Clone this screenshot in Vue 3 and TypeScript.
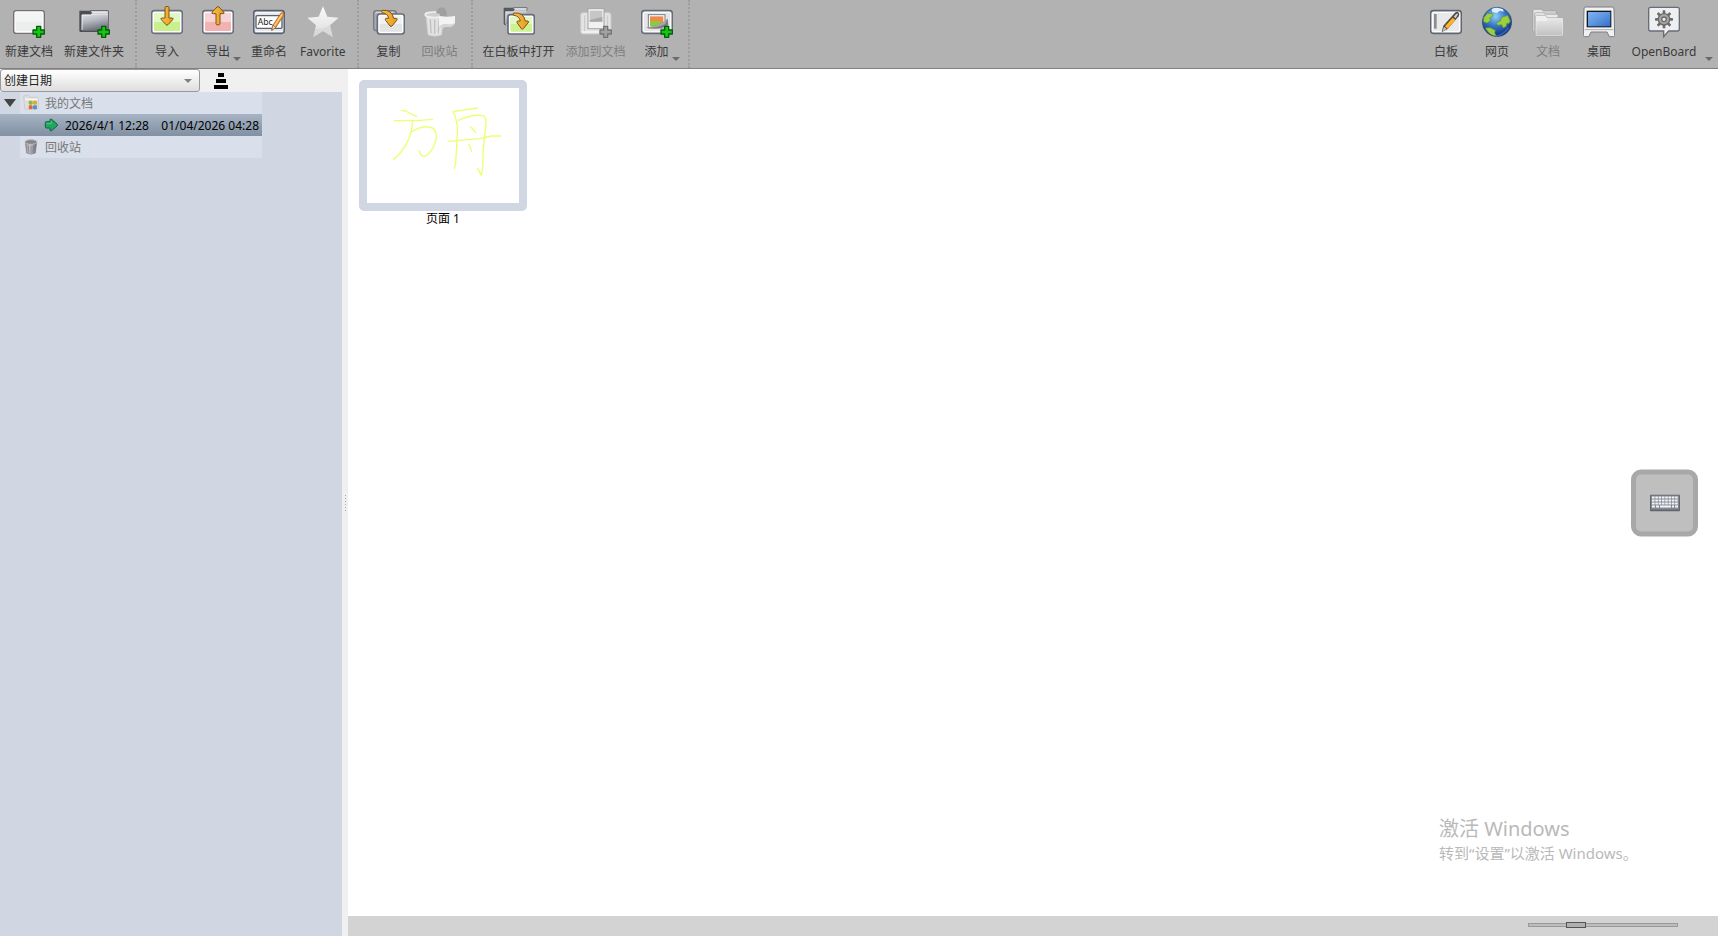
<script setup lang="ts">
import { ref } from 'vue'

interface Action {
  icon: string
  label: string
  disabled?: boolean
  menu?: boolean
}

const groups: Action[][] = [
  [
    { icon: 'doc', label: '新建文档' },
    { icon: 'folder', label: '新建文件夹' },
  ],
  [
    { icon: 'import', label: '导入' },
    { icon: 'export', label: '导出', menu: true },
    { icon: 'rename', label: '重命名' },
    { icon: 'star', label: 'Favorite' },
  ],
  [
    { icon: 'copy', label: '复制' },
    { icon: 'trash', label: '回收站', disabled: true },
  ],
  [
    { icon: 'open', label: '在白板中打开' },
    { icon: 'addto', label: '添加到文档', disabled: true },
    { icon: 'add', label: '添加', menu: true },
  ],
  [
    { icon: 'board', label: '白板' },
    { icon: 'web', label: '网页' },
    { icon: 'docs', label: '文档', disabled: true },
    { icon: 'desktop', label: '桌面' },
    { icon: 'app', label: 'OpenBoard', menu: true },
  ],
]

const sortKey = ref('创建日期')
const zoom = ref(29)
const expanded = ref(true)
const keyRows = [0, 1, 2]
const keyCols = [0, 1, 2, 3, 4, 5, 6, 7]
const teeth = [0, 45, 90, 135, 180, 225, 270, 315]
</script>

<template>
  <div class="app">
    <svg class="defs" aria-hidden="true">
      <defs>
        <linearGradient id="g-white" x1="0" y1="0" x2="0" y2="1">
          <stop offset="0" stop-color="#fbfbfb" /><stop offset="1" stop-color="#dcdcdc" />
        </linearGradient>
        <linearGradient id="g-front" x1="0" y1="0" x2="0" y2="1">
          <stop offset="0" stop-color="#e6e6e6" /><stop offset="1" stop-color="#c2c2c2" />
        </linearGradient>
        <linearGradient id="g-folder" x1="0" y1="0" x2="0.3" y2="1">
          <stop offset="0" stop-color="#e4e4ea" /><stop offset="0.5" stop-color="#b4b6be" /><stop offset="1" stop-color="#70737d" />
        </linearGradient>
        <linearGradient id="g-arrow" x1="0" y1="0" x2="1" y2="0">
          <stop offset="0" stop-color="#fbc04c" /><stop offset="1" stop-color="#e59a1c" />
        </linearGradient>
        <linearGradient id="g-screen" x1="0" y1="0" x2="1" y2="1">
          <stop offset="0" stop-color="#7fb4f2" /><stop offset="0.5" stop-color="#5c96e0" /><stop offset="1" stop-color="#326fca" />
        </linearGradient>
        <radialGradient id="g-globe" cx="0.45" cy="0.3" r="0.7">
          <stop offset="0" stop-color="#8fd0f5" /><stop offset="0.5" stop-color="#3473c8" /><stop offset="1" stop-color="#122a72" />
        </radialGradient>
        <linearGradient id="g-bin" x1="0" y1="0" x2="1" y2="0">
          <stop offset="0" stop-color="#8a8a90" /><stop offset="0.4" stop-color="#c8c8cd" /><stop offset="1" stop-color="#66666d" />
        </linearGradient>
      </defs>
    </svg>

    <header class="toolbar">
      <div v-for="(group, gi) in groups" :key="gi" class="group" :class="{ modes: gi === 4 }">
        <button
          v-for="a in group"
          :key="a.icon"
          type="button"
          class="action"
          :class="{ 'has-menu': a.menu }"
          :disabled="a.disabled"
        >
          <svg class="icon" viewBox="0 0 96 96" aria-hidden="true">
            <g v-if="a.icon === 'doc'">
              <rect x="2" y="14" width="92" height="68" rx="8" fill="#fff" stroke="#786e72" stroke-width="4" />
              <rect x="8" y="20" width="80" height="56" rx="3" fill="#eceeee" />
              <path d="M8 48h80V23q0-3-3-3H11q-3 0-3 3z" fill="#f3f5f5" />
            </g>
            <g v-else-if="a.icon === 'folder'">
              <path d="M4 14h34l4 8h50v56H8q-4 0-4-4z" fill="#4c4e56" />
              <path d="M37 14h54v10H42z" fill="#e8e8ec" stroke="#5c5e66" stroke-width="3" />
              <path d="M12 26h26l4-3h48v51H16q-4 0-4-4z" fill="url(#g-folder)" />
              <path d="M12 72V27h26l4-3h48" fill="none" stroke="#f1f1f4" stroke-width="3" />
            </g>
            <g v-else-if="a.icon === 'import' || a.icon === 'export'">
              <rect x="2" y="14" width="92" height="68" rx="8" fill="#fff" stroke="#6b6f7e" stroke-width="5" />
              <rect x="9" y="21" width="78" height="54" rx="3" :fill="a.icon === 'import' ? '#c8f08c' : '#f2b2b2'" />
              <path d="M9 48h78V24q0-3-3-3H12q-3 0-3 3z" :fill="a.icon === 'import' ? '#e2f8c2' : '#f7d3d3'" />
              <path v-if="a.icon === 'import'" d="M42 5q0-4 6-4t6 4v31h8q7 0 3 5L51 56q-3 3-6 0L31 41q-4-5 3-5h8z" class="arrow" />
              <path v-else d="M42 53q0 4 6 4t6-4V23h8q7 0 3-5L51 3q-3-3-6 0L31 18q-4 5 3 5h8z" class="arrow" />
            </g>
            <g v-else-if="a.icon === 'rename'">
              <rect x="2" y="14" width="92" height="68" rx="8" fill="#e3e6ea" stroke="#596071" stroke-width="5" />
              <path d="M8 20h80M8 76h80" stroke="#fff" stroke-width="3" />
              <rect x="9" y="29" width="78" height="38" rx="4" fill="#fff" stroke="#596071" stroke-width="4" />
              <text x="14" y="58" font-size="26" fill="#222">Abc</text>
              <path d="M56 73l4-16 24-36q5-3 9 3 0 4-2 6L68 65z" fill="#ef9d32" stroke="#9a4e18" stroke-width="2" />
              <path d="M64 60l23-35" stroke="#ffd37a" stroke-width="4" />
              <path d="M56 73l4-16 8 8z" fill="#f3dfc0" stroke="#70563c" stroke-width="2" />
            </g>
            <g v-else-if="a.icon === 'star'">
              <path d="M48 1l13 31 34 3-26 23 8 35-29-18-29 18 8-35L1 35l34-3z" fill="url(#g-white)" />
              <path d="M69 58l8 35-29-18-29 18 6-25q23 2 44-10z" fill="#d6d6d6" opacity=".7" />
            </g>
            <g v-else-if="a.icon === 'copy'">
              <rect x="2" y="14" width="68" height="60" rx="8" fill="#a8abb1" stroke="#777a82" stroke-width="4" />
              <path d="M8 22q0-3 4-3h50" fill="none" stroke="#ddd" stroke-width="3" />
              <rect x="13" y="24" width="81" height="60" rx="8" fill="#fff" stroke="#686d7c" stroke-width="5" />
              <rect x="20" y="31" width="67" height="46" rx="3" fill="#f0f1f1" />
              <path d="M20 54h67v20q0 3-3 3H23q-3 0-3-3z" fill="#e3e4e4" />
              <path d="M27 13q30-3 35 24h9q4 2 0 6L57 60q-3 3-6 0L38 43q-4-5 2-6h7q-3-15-20-17-3-4 0-7z" class="arrow" />
            </g>
            <g v-else-if="a.icon === 'trash'">
              <path d="M6 28h52l-5 58q-20 9-41 0z" fill="#e2e2e2" stroke="#cfcfcf" stroke-width="2" />
              <path d="M19 42l2 38M32 42v40M45 42l-2 38" stroke="#c0c0c0" stroke-width="4" stroke-linecap="round" />
              <ellipse cx="32" cy="26" rx="29" ry="8" fill="#d0d0d0" stroke="#f1f1f1" stroke-width="4" />
              <path d="M36 22q4-17 16-18 13 1 16 16v12H48q2-12-12-10z" fill="#a0a0a0" />
              <path d="M45 30q24 4 48 0v22L80 62H45z" fill="#f3f3f3" />
              <path d="M45 62q12-12 24-8 14 4 24-4-2 12-18 13-12-4-19 5z" fill="#d4d4d4" />
            </g>
            <g v-else-if="a.icon === 'open'">
              <path d="M2 5h28l4 7h38v46H8q-6 0-6-6z" fill="#555861" />
              <path d="M31 5h41v8H35z" fill="#ededf0" stroke="#6c6f77" stroke-width="3" />
              <path d="M8 17h22l4-3h36v42H12q-4 0-4-4z" fill="url(#g-folder)" stroke="#eee" stroke-width="2" />
              <rect x="15" y="26" width="79" height="58" rx="7" fill="#fff" stroke="#686d7c" stroke-width="5" />
              <rect x="22" y="33" width="65" height="44" rx="3" fill="#cdf292" />
              <path d="M22 54h65V36q0-3-3-3H25q-3 0-3 3z" fill="#e2f8c4" />
              <path d="M32 21q30-3 35 24h8q4 2 0 6L61 68q-3 3-6 0L43 51q-4-5 2-6h7q-3-15-20-17-3-4 0-7z" class="arrow" />
            </g>
            <g v-else-if="a.icon === 'addto'">
              <rect x="2" y="20" width="91" height="64" rx="7" fill="#e3e3e3" stroke="#c8c8c8" stroke-width="3" />
              <path d="M14 28v48M83 28v48" stroke="#c6c6c6" stroke-width="3" />
              <path d="M6 78h84" stroke="#f8f8f8" stroke-width="4" />
              <rect x="24" y="8" width="48" height="60" fill="#f2f2f2" stroke="#a4a4a4" stroke-width="3" />
              <rect x="29" y="14" width="38" height="33" fill="#c6c6c6" />
              <path d="M29 42l38-9v14H29z" fill="#a8a8a8" />
            </g>
            <g v-else-if="a.icon === 'add'">
              <rect x="2" y="14" width="92" height="68" rx="8" fill="#e6e6e8" stroke="#666b7a" stroke-width="5" />
              <rect x="7" y="19" width="82" height="58" rx="4" fill="none" stroke="#fff" stroke-width="3" />
              <rect x="22" y="26" width="50" height="40" fill="#fff" stroke="#777b86" stroke-width="3" />
              <path d="M27 31h40v24H27z" fill="#ef8a4c" />
              <path d="M27 47q12-8 40 4v11H27z" fill="#8fc93f" />
              <path d="M14 64q35 0 66-26l2 20q-30 16-68 6z" fill="#7b7b7b" />
              <path d="M14 64q35 0 66-26l-8 17q-28 13-58 9z" fill="#a9a9a9" />
            </g>
            <g v-else-if="a.icon === 'board'">
              <rect x="2" y="14" width="92" height="68" rx="8" fill="#e8e9ea" stroke="#5f6473" stroke-width="5" />
              <rect x="7" y="19" width="82" height="58" rx="4" fill="none" stroke="#fff" stroke-width="3" />
              <path d="M16 24v44" stroke="#8c8c8c" stroke-width="8" />
              <path d="M35 79l5-20 35-39q6-5 11 0 4 5 0 11L53 69z" fill="#55483c" />
              <path d="M45 61l23-26 8 7-23 26z" fill="#ffb428" />
              <path d="M71 32l8-9q4-2 5 2l-7 12z" fill="#cfcfcf" />
              <path d="M37 77l5-15 8 7z" fill="#c9c0b4" />
            </g>
            <g v-else-if="a.icon === 'web'">
              <circle cx="48" cy="48" r="44" fill="url(#g-globe)" stroke="#294478" stroke-width="2" />
              <path d="M32 9q16-8 34 1l2 7-12-3-8 7-14-3z" fill="#eef8ff" opacity=".9" />
              <path d="M8 35l12-13 13 1 3 6-10 7 3 7-10 8-11-3zM46 50l12-5 4-11 18-6 8 17-5 8-5-2-3 11-9 3-4-9-12 2zM13 66l15-1 15 8-2 8 6 10q-22-2-34-25z" fill="#9bcf3f" stroke="#5d962c" stroke-width="2" />
              <path d="M42 91q23-2 40-25" stroke="#3f74cf" stroke-width="5" fill="none" opacity=".7" />
            </g>
            <g v-else-if="a.icon === 'docs'">
              <path d="M6 10h22l6 5h38v60H3V13q0-3 3-3z" fill="#e4e4e4" stroke="#999" stroke-width="2" />
              <path d="M5 22h24l6-6h36v60H3V24z" fill="#cdcdcd" />
              <path d="M12 20h22l6 5h38v56H8V24q0-4 4-4z" fill="#e9e9e9" stroke="#a2a2a2" stroke-width="2" />
              <path d="M14 28h26l5 7h46q3 0 3 4v48q0 3-4 3H14q-4 0-4-4V32q0-4 4-4z" fill="#efefef" stroke="#a4a4a4" stroke-width="2" />
              <path d="M13 45h31l4-6h43v48H13z" fill="url(#g-front)" />
            </g>
            <g v-else-if="a.icon === 'desktop'">
              <path d="M8 3h80q5 0 5 6l2 80q0 3-4 3H79l-7-14H24l-7 14H5q-4 0-4-3L3 9q0-6 5-6z" fill="#f1f1f2" stroke="#797d86" stroke-width="3" />
              <path d="M5 71h86" stroke="#aaaeb5" stroke-width="3" />
              <rect x="11" y="14" width="74" height="50" fill="#15171c" />
              <rect x="15" y="18" width="67" height="43" fill="url(#g-screen)" />
            </g>
            <g v-else>
              <path d="M8 4h80q6 0 6 6v59q0 6-6 6H62L47 92V75H8q-6 0-6-6V10q0-6 6-6z" fill="#eeeff0" stroke="#686c77" stroke-width="4" />
              <g transform="translate(48 40)">
                <rect v-for="t in teeth" :key="t" x="-4" y="-27" width="8" height="14" rx="2" fill="#6b6b6b" :transform="`rotate(${t})`" />
                <circle r="17" fill="#a6a6a6" stroke="#6b6b6b" stroke-width="4" />
                <circle r="7" fill="#ededed" stroke="#6b6b6b" stroke-width="4" />
              </g>
            </g>
            <path
              v-if="['doc', 'folder', 'add', 'addto'].includes(a.icon)"
              d="M71 61h12v11h11v12H83v10H71V84H60V72h11z"
              class="plus"
              :class="{ off: a.disabled }"
            />
          </svg>
          <span>{{ a.label }}</span>
        </button>
      </div>
    </header>

    <div class="body">
      <aside class="sidebar">
        <div class="sort">
          <select v-model="sortKey" aria-label="排序">
            <option>创建日期</option>
          </select>
          <button type="button" class="order" aria-label="排序方向">
            <svg viewBox="0 0 14 16" aria-hidden="true">
              <path d="M4 0h6v4H4zM2 6h10v4H2zM0 12h14v4H0z" />
            </svg>
          </button>
        </div>
        <ul class="tree">
          <li class="row">
            <button type="button" class="twisty" aria-label="我的文档" :aria-expanded="expanded" @click="expanded = !expanded" />
            <div class="cell">
              <svg class="glyph" viewBox="0 0 48 48" aria-hidden="true">
                <path d="M2 5q0-3 3-3h12l4 5h22q3 0 3 3v30q0 3-3 3H9q-4 0-4-4z" fill="#dededb" stroke="#c4c4c4" stroke-width="2" />
                <path d="M6 13h38" stroke="#f5f5f5" stroke-width="5" />
                <rect x="17" y="17" width="12" height="12" rx="4" fill="#91b844" />
                <rect x="30" y="17" width="12" height="12" rx="4" fill="#e0ae24" />
                <rect x="17" y="31" width="12" height="12" rx="4" fill="#e46635" />
                <rect x="30" y="31" width="12" height="12" rx="4" fill="#4293d4" />
              </svg>
              <span>我的文档</span>
            </div>
          </li>
          <li v-if="expanded" class="row selected">
            <div class="cell child">
              <svg class="glyph" viewBox="0 0 48 48" aria-hidden="true">
                <path d="M7 17q0-3 3-3h11V9q0-5 5-2l16 14q3 3 0 6L26 41q-5 3-5-2v-6H10q-3 0-3-3z" fill="#20a75e" stroke="#17604b" stroke-width="3" />
                <path d="M11 20h14v-7" fill="none" stroke="#4ccb86" stroke-width="3" />
              </svg>
              <span>2026/4/1 12:28</span>
              <time>01/04/2026 04:28</time>
            </div>
          </li>
          <li class="row">
            <div class="cell">
              <svg class="glyph" viewBox="0 0 48 48" aria-hidden="true">
                <path d="M7 10h34l-4 32q-13 7-26 0z" fill="url(#g-bin)" stroke="#808087" stroke-width="2" />
                <ellipse cx="24" cy="9" rx="18" ry="7" fill="#85858c" stroke="#bbbbc1" stroke-width="3" />
                <path d="M16 20l2 21M24 21v21M32 20l-2 21" stroke="#77777e" stroke-width="2" />
              </svg>
              <span>回收站</span>
            </div>
          </li>
        </ul>
      </aside>

      <div class="splitter"><i v-for="n in 6" :key="n" /></div>

      <main class="content">
        <section class="pages">
          <figure class="page">
            <svg class="sheet" viewBox="111 84 456 344" role="img" aria-label="方舟">
              <g fill="none" stroke="#edff70" stroke-width="4" stroke-linecap="round" stroke-linejoin="round">
                <path d="M215 151l12 2 33 17" />
                <path d="M193 182h67l47-4" />
                <path d="M248 183q-3 40-18 67-20 35-40 48" />
                <path d="M241 217q34-20 57-16 23 4 21 32-6 36-30 54-18 6-21-15" />
                <path d="M442 144l-73 11q18 32 12 85l-4 70-4 16" />
                <path d="M384 181q42-17 67-15 18-1 17 25l-8 75-2 60-4 20-11-21" />
                <path d="M354 244l94-8 37-8h28" />
                <path d="M421 200l16 17M417 253l8 21" />
              </g>
            </svg>
            <figcaption>页面 1</figcaption>
          </figure>
        </section>
        <footer class="status">
          <input v-model="zoom" type="range" min="0" max="100" aria-label="缩略图大小" />
        </footer>
      </main>

      <button type="button" class="keyboard" aria-label="键盘">
        <svg viewBox="0 0 30 17" aria-hidden="true">
          <rect width="30" height="17" rx="1" fill="#62656d" />
          <rect x="1" y="1" width="28" height="14" fill="#858993" />
          <g fill="#f4f5f7">
            <template v-for="r in keyRows" :key="r">
              <rect v-for="c in keyCols" :key="c" :x="2 + c * 3.3" :y="2 + r * 3" width="2.6" height="2" />
            </template>
            <path d="M2 11h3v2H2zM6 11h3v2H6zM10 11h11v2H10zM22 11h2v2h-2zM25 11h3v2h-3z" />
          </g>
        </svg>
      </button>

      <div class="activate">
        <strong>激活 Windows</strong>
        <span>转到“设置”以激活 Windows。</span>
      </div>
    </div>
  </div>
</template>

<style>
body {
  margin: 0;
}
</style>

<style scoped>
.app {
  display: flex;
  flex-direction: column;
  min-height: 100vh;
  background: #fff;
  color: #000;
  font: 12px/16px "Noto Sans", "Noto Sans CJK SC", sans-serif;
}
.defs {
  position: absolute;
  width: 0;
  height: 0;
}
button,
select {
  font: inherit;
  border: 0;
  padding: 0;
  margin: 0;
  background: none;
  color: inherit;
}
.toolbar {
  display: flex;
  height: 68px;
  background: #b2b2b2;
  border-bottom: 1px solid #808080;
}
.group {
  display: flex;
  padding-right: 5px;
  margin-right: 5px;
  border-right: 2px dotted #9d9d9d;
}
.group.modes {
  margin: 0 0 0 auto;
  padding-right: 14px;
  border: 0;
}
.action {
  position: relative;
  display: flex;
  flex-direction: column;
  align-items: center;
  gap: 6px;
  min-width: 50px;
  padding: 6px 5px 0;
  margin-right: 1px;
  color: #3a3a3a;
  white-space: nowrap;
}
.action:disabled {
  color: #7e7e7e;
}
.modes .has-menu {
  min-width: 78px;
}
.has-menu::after {
  content: "";
  position: absolute;
  right: 2px;
  top: 57px;
  border: 4px solid transparent;
  border-top-color: #6a6a6a;
  border-bottom: 0;
}
.modes .has-menu::after {
  right: -10px;
}
.icon {
  width: 32px;
  height: 32px;
}
.arrow {
  fill: url(#g-arrow);
  stroke: #7d5418;
  stroke-width: 3;
  stroke-linejoin: round;
}
.plus {
  fill: #12c812;
  stroke: #065c0a;
  stroke-width: 4;
  stroke-linejoin: round;
}
.plus.off {
  fill: #a2a2a2;
  stroke: #747474;
}
.body {
  position: relative;
  display: flex;
  flex: 1;
}
.sidebar {
  display: flex;
  flex-direction: column;
  width: 342px;
  background: #f0f0f0;
}
.sort {
  position: relative;
  display: flex;
  align-items: center;
  gap: 14px;
  height: 23px;
}
.sort select {
  appearance: none;
  width: 200px;
  height: 23px;
  padding: 0 3px;
  border: 1px solid #999;
  border-radius: 3px;
  color: #222;
  background: linear-gradient(#fff, #dedede);
}
.sort::after {
  content: "";
  position: absolute;
  left: 184px;
  top: 10px;
  border: 4px solid transparent;
  border-top-color: #808080;
  border-bottom: 0;
  pointer-events: none;
}
.order {
  display: flex;
}
.order svg {
  width: 14px;
  height: 16px;
}
.tree {
  flex: 1;
  margin: 0;
  padding: 0;
  list-style: none;
  background: #d0d7e3;
}
.row {
  display: flex;
  justify-content: flex-end;
  width: 262px;
  height: 22px;
}
.twisty {
  flex: 1;
  display: flex;
  align-items: center;
  justify-content: center;
}
.twisty::before {
  content: "";
  border: 6px solid transparent;
  border-top: 8px solid #444;
  border-bottom: 0;
}
.cell {
  display: flex;
  align-items: center;
  gap: 6px;
  box-sizing: border-box;
  width: 242px;
  padding: 0 3px;
  background: #d9dfeb;
  color: #777;
}
.cell span,
.cell time {
  padding-top: 2px;
}
.selected {
  background: linear-gradient(#a6b4c4, #8190a2);
}
.child {
  padding-left: 23px;
  background: none;
  color: #000;
}
.child time {
  margin-left: auto;
}
.glyph {
  width: 16px;
  height: 16px;
}
.splitter {
  display: flex;
  flex-direction: column;
  align-items: center;
  justify-content: center;
  gap: 2px;
  width: 6px;
  background: #f0f0f0;
}
.splitter i {
  width: 1px;
  height: 1px;
  background: #aaa;
}
.content {
  flex: 1;
  display: flex;
  flex-direction: column;
}
.pages {
  flex: 1;
  padding: 11px;
}
.page {
  width: 168px;
  margin: 0;
  text-align: center;
}
.sheet {
  display: block;
  box-sizing: border-box;
  width: 100%;
  border: 8px solid #d0d7e3;
  border-radius: 5px;
  background: #fff;
}
.status {
  display: flex;
  align-items: center;
  justify-content: flex-end;
  height: 20px;
  padding-right: 40px;
  background: #d3d3d3;
}
.status input {
  appearance: none;
  width: 150px;
  height: 4px;
  margin: 0 0 2px;
  box-sizing: border-box;
  background: #bdbdbd;
  box-shadow: inset 0 0 0 1px #999;
}
.status input::-webkit-slider-thumb {
  appearance: none;
  width: 20px;
  height: 6px;
  box-sizing: border-box;
  border: 1px solid #555;
  background: #b0b0b0;
}
.keyboard {
  position: absolute;
  right: 20px;
  top: 50%;
  transform: translateY(-50%);
  display: flex;
  align-items: center;
  justify-content: center;
  width: 67px;
  height: 67px;
  box-sizing: border-box;
  border: 5px solid #a8a8a8;
  border-radius: 10px;
  background: #bfbfbf;
}
.keyboard svg {
  width: 30px;
  height: 17px;
}
.activate {
  position: absolute;
  right: 79px;
  bottom: 72px;
  width: 200px;
  display: flex;
  flex-direction: column;
  color: #b9b9b9;
  white-space: nowrap;
  font-size: 15px;
  line-height: 22px;
}
.activate strong {
  font-size: 20px;
  line-height: 26px;
  font-weight: 400;
}
</style>
